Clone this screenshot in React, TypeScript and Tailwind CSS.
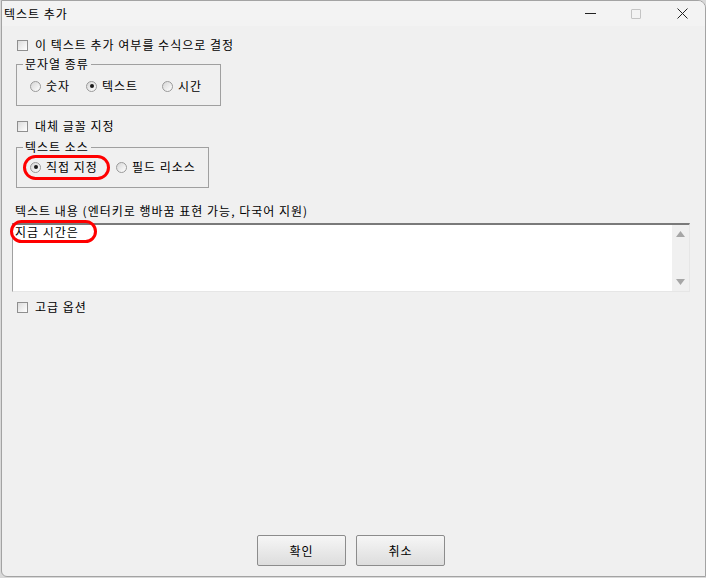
import React, { useState } from "react";

const font = { fontFamily: '"Noto Sans CJK KR", "Liberation Sans", sans-serif' };

const CheckBox: React.FC<{ label: string }> = ({ label }) => {
  const [checked, setChecked] = useState(false);
  return (
    <label className="flex items-center h-[14px] ml-[15px] cursor-default" onClick={() => setChecked(!checked)}>
      <span className="w-[11px] h-[11px] border border-[#8f8f8f] bg-gradient-to-br from-[#dcdcdc] to-white flex items-center justify-center text-[9px] leading-none">
        {checked ? "✓" : ""}
      </span>
      <span className="ml-[7px] text-[12px] leading-[14px] text-black">{label}</span>
    </label>
  );
};

const Radio: React.FC<{ label: string; checked: boolean; onClick: () => void; className?: string }> = ({
  label,
  checked,
  onClick,
  className,
}) => (
  <label className={"flex items-center h-[14px] cursor-default " + (className ?? "")} onClick={onClick}>
    <span className="w-[11px] h-[11px] shrink-0 rounded-full border border-[#9a9a9a] bg-gradient-to-br from-[#d6d6d6] to-white flex items-center justify-center">
      {checked && <span className="w-[4px] h-[4px] rounded-full bg-[#1a1a1a]" />}
    </span>
    <span className="ml-[5px] text-[12px] leading-[14px] text-black whitespace-nowrap">{label}</span>
  </label>
);

const Triangle: React.FC<{ up: boolean }> = ({ up }) => (
  <svg width="9" height="6" viewBox="0 0 9 6">
    <path d={up ? "M4.5 0 L9 6 L0 6 Z" : "M0 0 L9 0 L4.5 6 Z"} fill="#a6a6a6" />
  </svg>
);

const App: React.FC = () => {
  const [kind, setKind] = useState("text");
  const [source, setSource] = useState("direct");
  const [content, setContent] = useState("지금 시간은");

  return (
    <div className="w-[706px] h-[578px] bg-[#d9d9d9] overflow-hidden tracking-[1px]" style={font}>
      <div className="ml-[1px] w-[705px] h-[577px] bg-[#f0f0f0] border border-[#a3a3a3] rounded-tr-[8px] rounded-bl-[6px] flex flex-col overflow-hidden">
        {/* title bar */}
        <div className="h-[25px] bg-[#f3f3f3] flex items-center justify-between">
          <span className="ml-[2px] text-[12px] leading-[14px] text-black">텍스트 추가</span>
          <div className="flex items-center h-full">
            <div className="w-[46px] h-full flex items-center justify-center">
              <span className="w-[11px] h-[1px] bg-[#222]" />
            </div>
            <div className="w-[46px] h-full flex items-center justify-center">
              <span className="w-[10px] h-[10px] border border-[#c4c4c4] rounded-[1px]" />
            </div>
            <div className="w-[46px] h-full flex items-center justify-center">
              <svg width="11" height="11" viewBox="0 0 11 11">
                <path d="M0.5 0.5 L10.5 10.5 M10.5 0.5 L0.5 10.5" stroke="#222" strokeWidth="1" />
              </svg>
            </div>
          </div>
        </div>

        {/* body */}
        <div className="flex-1 flex flex-col">
          <div className="mt-[12px]">
            <CheckBox label="이 텍스트 추가 여부를 수식으로 결정" />
          </div>

          <fieldset className="mt-[5px] ml-[14px] w-[205px] border border-[#a0a0a0] pl-[13px] pt-[8px] pb-[12px] m-0">
            <legend className="ml-[-7px] px-[2px] text-[12px] leading-[14px] text-black">문자열 종류</legend>
            <div className="flex">
              <Radio label="숫자" checked={kind === "num"} onClick={() => setKind("num")} className="w-[56px]" />
              <Radio label="텍스트" checked={kind === "text"} onClick={() => setKind("text")} className="w-[76px]" />
              <Radio label="시간" checked={kind === "time"} onClick={() => setKind("time")} />
            </div>
          </fieldset>

          <div className="mt-[13px]">
            <CheckBox label="대체 글꼴 지정" />
          </div>

          <fieldset className="mt-[7px] ml-[14px] w-[193px] border border-[#a0a0a0] pl-[13px] pt-[6px] pb-[13px] m-0">
            <legend className="ml-[-7px] px-[2px] text-[12px] leading-[14px] text-black">텍스트 소스</legend>
            <div className="flex">
              <div className="relative w-[86px]">
                <Radio label="직접 지정" checked={source === "direct"} onClick={() => setSource("direct")} />
                <span className="absolute left-[-7px] top-[-5px] w-[87px] h-[25px] rounded-full border-[3px] border-[#ff0000] pointer-events-none" />
              </div>
              <Radio label="필드 리소스" checked={source === "field"} onClick={() => setSource("field")} />
            </div>
          </fieldset>

          <div className="mt-[16px] ml-[13px] h-[14px] text-[12px] leading-[14px] text-black">
            텍스트 내용 (엔터키로 행바꿈 표현 가능, 다국어 지원)
          </div>

          <div className="relative mt-[5px] ml-[10px] w-[678px] h-[69px] bg-white border-t-2 border-l border-t-[#7a7a7a] border-l-[#a0a0a0] border-r border-b border-r-[#e6e6e6] border-b-[#e6e6e6] flex">
            <textarea
              value={content}
              onChange={(e) => setContent(e.target.value)}
              className="flex-1 resize-none outline-none pl-[2px] pt-0 text-[12px] leading-[14px] tracking-[1px] text-black bg-white overflow-hidden"
              style={font}
            />
            <div className="w-[17px] bg-[#f0f0f0] flex flex-col items-center justify-between pt-[6px] pb-[6px]">
              <Triangle up />
              <Triangle up={false} />
            </div>
            <span className="absolute left-[-3px] top-[-5px] w-[87px] h-[23px] rounded-full border-[3px] border-[#ff0000] pointer-events-none" />
          </div>

          <div className="mt-[8px]">
            <CheckBox label="고급 옵션" />
          </div>

          <div className="mt-auto mb-[10px] flex justify-center gap-[10px] pr-[5px]">
            <button className="w-[89px] h-[31px] border border-[#8c8c8c] rounded-[2px] bg-gradient-to-b from-[#f6f6f6] to-[#dddddd] text-[12px] tracking-[1px] text-black">
              확인
            </button>
            <button className="w-[89px] h-[31px] border border-[#8c8c8c] rounded-[2px] bg-gradient-to-b from-[#f6f6f6] to-[#dddddd] text-[12px] tracking-[1px] text-black">
              취소
            </button>
          </div>
        </div>
      </div>
    </div>
  );
};

export default App;
